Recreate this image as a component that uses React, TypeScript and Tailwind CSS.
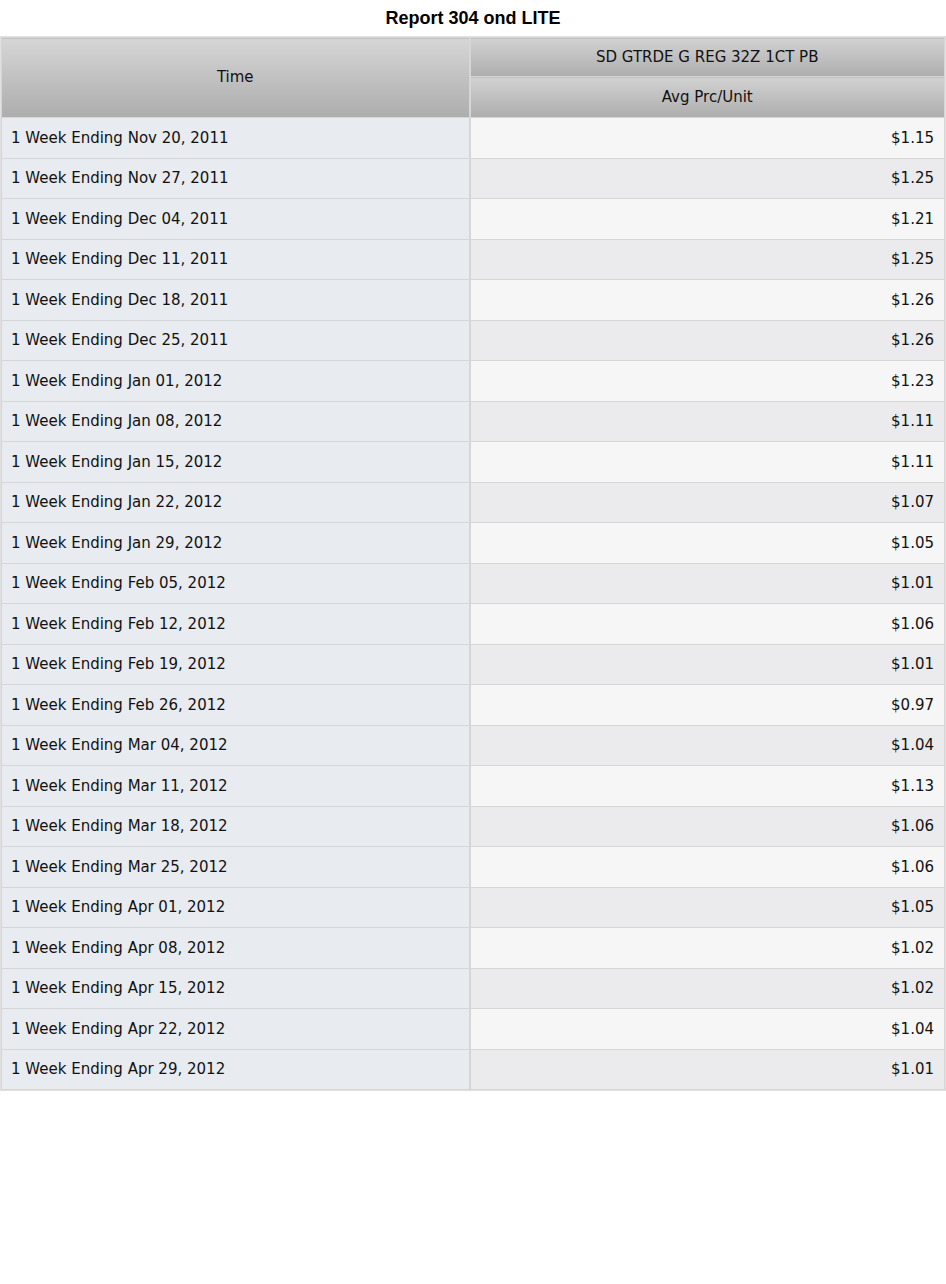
const rows: [string, string][] = [
  ['Nov 20, 2011', '$1.15'],
  ['Nov 27, 2011', '$1.25'],
  ['Dec 04, 2011', '$1.21'],
  ['Dec 11, 2011', '$1.25'],
  ['Dec 18, 2011', '$1.26'],
  ['Dec 25, 2011', '$1.26'],
  ['Jan 01, 2012', '$1.23'],
  ['Jan 08, 2012', '$1.11'],
  ['Jan 15, 2012', '$1.11'],
  ['Jan 22, 2012', '$1.07'],
  ['Jan 29, 2012', '$1.05'],
  ['Feb 05, 2012', '$1.01'],
  ['Feb 12, 2012', '$1.06'],
  ['Feb 19, 2012', '$1.01'],
  ['Feb 26, 2012', '$0.97'],
  ['Mar 04, 2012', '$1.04'],
  ['Mar 11, 2012', '$1.13'],
  ['Mar 18, 2012', '$1.06'],
  ['Mar 25, 2012', '$1.06'],
  ['Apr 01, 2012', '$1.05'],
  ['Apr 08, 2012', '$1.02'],
  ['Apr 15, 2012', '$1.02'],
  ['Apr 22, 2012', '$1.04'],
  ['Apr 29, 2012', '$1.01'],
];

export default function App() {
  return (
    <div className="w-[946px] bg-white text-black">
      <h1 className="h-9 flex items-center justify-center text-[18px] font-bold font-['Liberation_Sans',Arial,sans-serif]">
        Report 304 ond LITE
      </h1>

      <div className="border border-[#e0e0e0] font-['DejaVu_Sans',Verdana,sans-serif] text-[15px] text-[#111]">
        <table className="w-full border-collapse table-fixed">
          <colgroup>
            <col className="w-[468px]" />
            <col />
          </colgroup>
          <thead>
            <tr className="h-[39px]">
              <th
                rowSpan={2}
                className="font-normal border border-[#d6d6d6] bg-gradient-to-b from-[#d6d6d6] to-[#adadad]"
              >
                Time
              </th>
              <th className="font-normal border border-[#d6d6d6] border-l-2 bg-gradient-to-b from-[#d2d2d2] to-[#adadad]">
                SD GTRDE G REG 32Z 1CT PB
              </th>
            </tr>
            <tr className="h-[41px]">
              <th className="font-normal border border-[#d6d6d6] border-l-2 bg-gradient-to-b from-[#d2d2d2] to-[#adadad]">
                Avg Prc/Unit
              </th>
            </tr>
          </thead>
          <tbody>
            {rows.map(([date, price], i) => (
              <tr key={date} className="h-[40.5px]">
                <td className="border border-[#d6d6d6] bg-[#e8ebf0] pl-[9px]">
                  1 Week Ending {date}
                </td>
                <td
                  className={`border border-[#d6d6d6] border-l-2 text-right pr-[10px] ${
                    i % 2 === 0 ? 'bg-[#f6f6f6]' : 'bg-[#ebebed]'
                  }`}
                >
                  {price}
                </td>
              </tr>
            ))}
          </tbody>
        </table>
      </div>
    </div>
  );
}
